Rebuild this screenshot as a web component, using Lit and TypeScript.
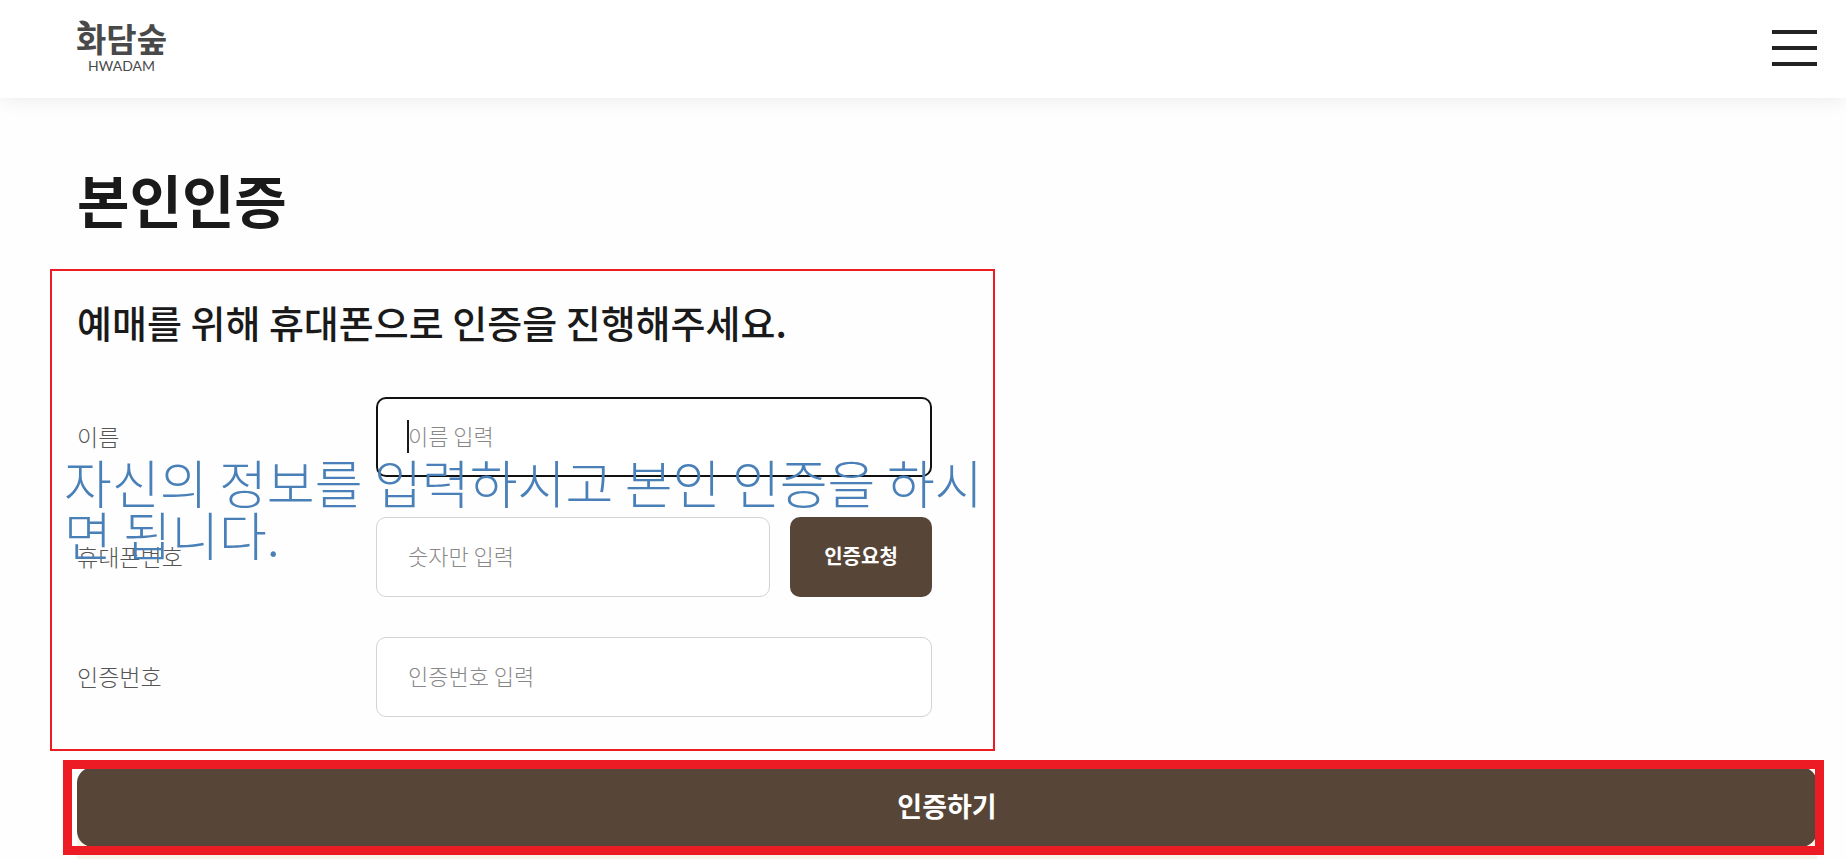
import { LitElement, html, css } from "lit";
import { customElement, query } from "lit/decorators.js";

@customElement("app-root")
export class AppRoot extends LitElement {
  @query("#name") private nameInput!: HTMLInputElement;

  static styles = css`
    :host {
      display: block;
      min-height: 100vh;
      max-height: 100vh;
      overflow: hidden;
      background: #fefefe;
      color: #1a1a1a;
      font-family: "Noto Sans CJK KR", "Noto Sans", sans-serif;
    }
    * { box-sizing: border-box; }
    button, input { font: inherit; }
    .header {
      display: flex;
      align-items: center;
      justify-content: space-between;
      height: 98px;
      padding: 0 29px 2px 76px;
      background: #fff;
      box-shadow: 0 0 20px rgba(0, 0, 0, 0.09);
    }
    .logo {
      position: relative;
      display: flex;
      flex-direction: column;
      align-items: center;
      color: #494949;
      text-decoration: none;
    }
    .logo-name { font-size: 33px; font-weight: 700; line-height: 36px; }
    .logo-latin { font-family: Lato, sans-serif; font-size: 14px; font-weight: 400; line-height: 20px; }
    .leaf { position: absolute; left: 3px; top: 0; }
    .menu {
      display: flex;
      flex-direction: column;
      justify-content: space-between;
      width: 45px;
      height: 36px;
      padding: 0;
      border: 0;
      background: none;
    }
    .menu span { height: 4px; background: #222; }
    .main { padding: 60px 29px 0 77px; }
    h1 { margin: 0; font-size: 57px; font-weight: 700; line-height: 80px; }
    .panel {
      position: relative;
      max-width: 945px;
      margin: 31px 0 16px -27px;
      padding: 23px 61px 32px 25px;
      border: 2px solid #ed1c24;
    }
    h2 { margin: 0 0 47px; font-size: 38px; font-weight: 500; line-height: 56px; }
    .fields { display: flex; flex-direction: column; gap: 40px; }
    .row { display: grid; grid-template-columns: 299px 1fr; align-items: center; }
    label { padding-bottom: 2px; font-size: 23px; font-weight: 300; color: #555; }
    .control { display: flex; gap: 20px; }
    input {
      flex: 1;
      min-width: 0;
      height: 80px;
      padding: 0 31px 4px;
      border: 1px solid #d3d3d3;
      border-radius: 10px;
      background: #fff;
      font-size: 22px;
      font-weight: 300;
      color: #1a1a1a;
      outline: none;
    }
    input::placeholder { color: #888; opacity: 1; }
    .active {
      padding: 0 30px 4px;
      border: 2px solid #111;
      caret-color: transparent;
      background: linear-gradient(#1a1a1a, #1a1a1a) 29px 21px / 2px 33px no-repeat #fff;
    }
    .request {
      width: 142px;
      padding: 0 0 4px;
      border: 0;
      border-radius: 10px;
      background: #574537;
      color: #fff;
      font-size: 20px;
      font-weight: 700;
    }
    .note {
      position: absolute;
      left: 12px;
      right: 0;
      top: 185px;
      margin: 0;
      font-size: 52px;
      font-weight: 300;
      line-height: 52px;
      color: #4a80b8;
      pointer-events: none;
    }
    .submit-area { position: relative; }
    .submit {
      position: relative;
      display: block;
      width: 100%;
      height: 80px;
      padding: 0 0 4px;
      border: 0;
      border-radius: 16px;
      background: #574537;
      color: #fff;
      font-size: 27px;
      font-weight: 700;
    }
    .mark {
      position: absolute;
      inset: -7px -7px -8px -14px;
      border: 9px solid #ed1c24;
      pointer-events: none;
    }
    .notice { height: 40px; margin-top: -10px; background: #f7f4ea; }
  `;

  firstUpdated() {
    this.nameInput.focus({ preventScroll: true });
  }

  render() {
    return html`
      <header class="header">
        <a class="logo" href="#">
          <svg class="leaf" width="12" height="8" viewBox="0 0 12 8" aria-hidden="true">
            <path d="M0 1q9-2 11 6q-8 0-11-6z" fill="#494949" />
          </svg>
          <span class="logo-name">화담숲</span>
          <span class="logo-latin">HWADAM</span>
        </a>
        <button class="menu" type="button" aria-label="메뉴"><span></span><span></span><span></span></button>
      </header>
      <main class="main">
        <h1>본인인증</h1>
        <section class="panel">
          <h2>예매를 위해 휴대폰으로 인증을 진행해주세요.</h2>
          <div class="fields">
            <div class="row">
              <label for="name">이름</label>
              <div class="control"><input id="name" class="active" type="text" placeholder="이름 입력" /></div>
            </div>
            <div class="row">
              <label for="phone">휴대폰번호</label>
              <div class="control">
                <input id="phone" type="tel" placeholder="숫자만 입력" />
                <button class="request" type="button">인증요청</button>
              </div>
            </div>
            <div class="row">
              <label for="code">인증번호</label>
              <div class="control"><input id="code" type="text" placeholder="인증번호 입력" /></div>
            </div>
          </div>
          <p class="note">자신의 정보를 입력하시고 본인 인증을 하시면 됩니다.</p>
        </section>
        <div class="submit-area">
          <button class="submit" type="button">인증하기</button>
          <div class="mark"></div>
        </div>
        <div class="notice"></div>
      </main>
    `;
  }
}
